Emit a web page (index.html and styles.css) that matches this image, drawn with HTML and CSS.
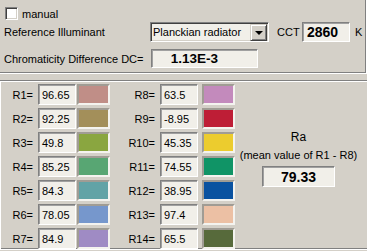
FILE: index.html
```html
<!DOCTYPE html>
<html>
<head>
    <title>Colour Rendering</title>
    <link rel="stylesheet" href="styles.css">
</head>
<body>
    <div id="top-panel" class="panel">
        <div class="row row-manual">
            <span class="checkbox"></span>
            <span class="label">manual</span>
        </div>
        <div class="row row-illuminant">
            <span class="label illum-label">Reference Illuminant</span>
            <div class="select">
                <span class="select-text">Planckian radiator</span>
                <span class="select-btn"><span class="arrow"></span></span>
            </div>
            <span class="label cct-label">CCT</span>
            <div class="field cct-field">2860</div>
            <span class="label k-label">K</span>
        </div>
        <div class="row row-dc">
            <span class="label dc-label">Chromaticity Difference DC=</span>
            <div class="field dc-field">1.13E-3</div>
        </div>
    </div>
    <div id="bottom-panel" class="panel">
        <div class="r-col col-1">
            <div class="r-row"><span class="r-label">R1=</span><span class="field r-val">96.65</span><span class="swatch" style="background:#c08e87"></span></div>
            <div class="r-row"><span class="r-label">R2=</span><span class="field r-val">92.25</span><span class="swatch" style="background:#a38f5a"></span></div>
            <div class="r-row"><span class="r-label">R3=</span><span class="field r-val">49.8</span><span class="swatch" style="background:#8aa640"></span></div>
            <div class="r-row"><span class="r-label">R4=</span><span class="field r-val">85.25</span><span class="swatch" style="background:#58a673"></span></div>
            <div class="r-row"><span class="r-label">R5=</span><span class="field r-val">84.3</span><span class="swatch" style="background:#62a3a6"></span></div>
            <div class="r-row"><span class="r-label">R6=</span><span class="field r-val">78.05</span><span class="swatch" style="background:#7697cc"></span></div>
            <div class="r-row"><span class="r-label">R7=</span><span class="field r-val">84.9</span><span class="swatch" style="background:#9f8bc4"></span></div>
        </div>
        <div class="r-col col-2">
            <div class="r-row"><span class="r-label">R8=</span><span class="field r-val">63.5</span><span class="swatch" style="background:#c38abc"></span></div>
            <div class="r-row"><span class="r-label">R9=</span><span class="field r-val">-8.95</span><span class="swatch" style="background:#be1e36"></span></div>
            <div class="r-row"><span class="r-label">R10=</span><span class="field r-val">45.35</span><span class="swatch" style="background:#eccc2e"></span></div>
            <div class="r-row"><span class="r-label">R11=</span><span class="field r-val">74.55</span><span class="swatch" style="background:#109466"></span></div>
            <div class="r-row"><span class="r-label">R12=</span><span class="field r-val">38.95</span><span class="swatch" style="background:#0a52a0"></span></div>
            <div class="r-row"><span class="r-label">R13=</span><span class="field r-val">97.4</span><span class="swatch" style="background:#ecc0a4"></span></div>
            <div class="r-row"><span class="r-label">R14=</span><span class="field r-val">65.5</span><span class="swatch" style="background:#576a3b"></span></div>
        </div>
        <div class="ra-box">
            <div class="ra-title">Ra</div>
            <div class="ra-sub">(mean value of R1 - R8)</div>
            <div class="field ra-field">79.33</div>
        </div>
    </div>
</body>
</html>
```
FILE: styles.css
```css
body {
    margin: 0;
    padding: 0;
    background-color: #d4d0c8;
    color: #000;
    font-family: "Liberation Sans", Arial, sans-serif;
    font-size: 11px;
    overflow: hidden;
    width: 367px;
    height: 251px;
}
.panel {
    box-sizing: border-box;
    border: 1px solid;
    border-color: #808080 #fff #fff #808080;
    box-shadow: inset 1px 1px #fff, inset -1px -1px #808080;
}
#top-panel {
    margin: -2px 0 0 -2px;
    width: 369px;
    height: 76px;
    padding-left: 5px;
}
.row {
    display: flex;
    align-items: center;
}
.row-manual {
    margin-top: 8px;
    height: 13px;
    padding-left: 1px;
}
.checkbox {
    box-sizing: border-box;
    width: 13px;
    height: 13px;
    background: #fff;
    border: 1px solid;
    border-color: #808080 #fff #fff #808080;
    box-shadow: inset 1px 1px #404040, inset -1px -1px #d4d0c8;
    margin-right: 4px;
}
.row-illuminant {
    margin-top: 2px;
    height: 20px;
}
.illum-label {
    width: 146px;
}
.select {
    box-sizing: border-box;
    width: 119px;
    height: 20px;
    display: flex;
    align-items: center;
    background: #f1efe9;
    border: 1px solid;
    border-color: #808080 #fff #fff #808080;
    box-shadow: inset 1px 1px #404040, inset -1px -1px #d4d0c8;
    padding: 1px 1px 1px 2px;
}
.select-text {
    flex-grow: 1;
    font-size: 11px;
}
.select-btn {
    box-sizing: border-box;
    width: 17px;
    height: 17px;
    background: #d4d0c8;
    border: 1px solid;
    border-color: #d4d0c8 #404040 #404040 #d4d0c8;
    box-shadow: inset 1px 1px #fff, inset -1px -1px #808080;
    display: flex;
    align-items: center;
    justify-content: center;
}
.arrow {
    width: 0;
    height: 0;
    border-left: 4px solid transparent;
    border-right: 4px solid transparent;
    border-top: 4px solid #000;
    margin-top: 1px;
}
.cct-label {
    margin-left: 8px;
    width: 25px;
}
.field {
    box-sizing: border-box;
    background: #f1efe9;
    border: 1px solid;
    border-color: #808080 #fff #fff #808080;
    box-shadow: inset 1px 1px #a0a0a0;
    display: flex;
    align-items: center;
}
.cct-field {
    width: 48px;
    height: 20px;
    font-weight: bold;
    font-size: 14px;
    padding-left: 4px;
}
.k-label {
    margin-left: 5px;
}
.row-dc {
    margin-top: 7px;
    height: 19px;
}
.dc-label {
    width: 147px;
}
.dc-field {
    width: 107px;
    height: 19px;
    font-weight: bold;
    font-size: 13.5px;
    justify-content: center;
    padding-right: 20px;
}
#bottom-panel {
    margin: 6px 0 0 -1px;
    width: 370px;
    height: 170px;
    display: flex;
    align-items: flex-start;
    padding-top: 3px;
}
.r-col {
    display: flex;
    flex-direction: column;
    gap: 3px;
}
.r-row {
    display: flex;
    align-items: center;
    height: 21px;
}
.r-label {
    text-align: right;
    margin-right: 5px;
}
.col-1 .r-label {
    width: 33px;
}
.col-2 .r-label {
    width: 45px;
}
.r-val {
    width: 38px;
    height: 21px;
    padding-left: 3px;
}
.swatch {
    box-sizing: border-box;
    width: 33px;
    height: 21px;
    border: 2px solid;
    border-color: #a09c94 #f4f3ef #f4f3ef #a09c94;
    margin-left: 1px;
}
.col-2 .swatch {
    margin-left: 4px;
}
.ra-box {
    width: 127px;
    display: flex;
    flex-direction: column;
    align-items: center;
    margin-top: 46px;
}
.ra-title {
    font-size: 12px;
    line-height: 14px;
}
.ra-sub {
    margin-top: 5px;
    line-height: 13px;
}
.ra-field {
    margin-top: 4px;
    width: 73px;
    height: 21px;
    justify-content: center;
    font-weight: bold;
    font-size: 14px;
}
```
